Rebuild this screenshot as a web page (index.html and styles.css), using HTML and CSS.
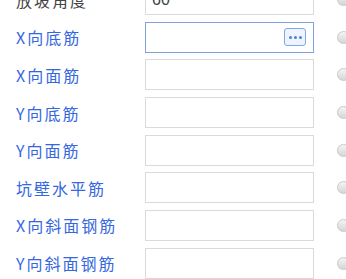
FILE: index.html
```html
<!DOCTYPE html>
<html>
  <head>
    <title>钢筋设置</title>
    <link rel="stylesheet" href="styles.css">
  </head>
  <body>
    <div class="form-list">
      <div class="form-row">
        <label class="plain">放坡角度</label>
        <input type="text" class="field" value="60" />
        <span class="radio"></span>
      </div>

      <div class="form-row">
        <label>X向底筋</label>
        <div class="field active">
          <span class="more-btn"><i></i><i></i><i></i></span>
        </div>
        <span class="radio"></span>
      </div>

      <div class="form-row">
        <label>X向面筋</label>
        <input type="text" class="field" />
        <span class="radio"></span>
      </div>

      <div class="form-row">
        <label>Y向底筋</label>
        <input type="text" class="field" />
        <span class="radio"></span>
      </div>

      <div class="form-row">
        <label>Y向面筋</label>
        <input type="text" class="field" />
        <span class="radio"></span>
      </div>

      <div class="form-row">
        <label>坑壁水平筋</label>
        <input type="text" class="field" />
        <span class="radio"></span>
      </div>

      <div class="form-row">
        <label>X向斜面钢筋</label>
        <input type="text" class="field" />
        <span class="radio"></span>
      </div>

      <div class="form-row">
        <label>Y向斜面钢筋</label>
        <input type="text" class="field" />
        <span class="radio"></span>
      </div>
    </div>
  </body>
</html>
```

FILE: styles.css
```css
body {
  margin: 0;
  background: #fff;
  font-family: "Noto Sans CJK SC", "Noto Sans", sans-serif;
  overflow: hidden;
}
.form-list {
  margin-top: -19.3px;
  width: 360px;
}
.form-row {
  display: flex;
  align-items: center;
  height: 37.67px;
}
.form-row > * {
  flex-shrink: 0;
}
.form-row label {
  width: 129px;
  padding-left: 16px;
  font-size: 16px;
  letter-spacing: 2px;
  color: #3567df;
  white-space: nowrap;
}
.form-row label.plain {
  color: #444;
}
.field {
  box-sizing: border-box;
  width: 169px;
  height: 31px;
  border: 1px solid #dadada;
  padding: 0 6px;
  font-family: "Liberation Sans", Arial, sans-serif;
  font-size: 16px;
  color: #444;
  outline: none;
  background: #fff;
}
.field.active {
  border-color: #7fa2dc;
  display: flex;
  align-items: center;
  justify-content: flex-end;
  padding-right: 7px;
}
.more-btn {
  box-sizing: border-box;
  width: 22px;
  height: 18px;
  border: 1px solid #7ea7e3;
  border-radius: 3px;
  background: #eef4fd;
  display: flex;
  align-items: center;
  justify-content: center;
  gap: 2px;
}
.more-btn i {
  width: 3px;
  height: 3px;
  border-radius: 50%;
  background: #4f7fd0;
}
.radio {
  box-sizing: border-box;
  width: 13px;
  height: 13px;
  margin-left: 23px;
  border: 1px solid #c8c8c8;
  border-radius: 50%;
  background: linear-gradient(#f4f4f4, #d6d6d6);
}
```
